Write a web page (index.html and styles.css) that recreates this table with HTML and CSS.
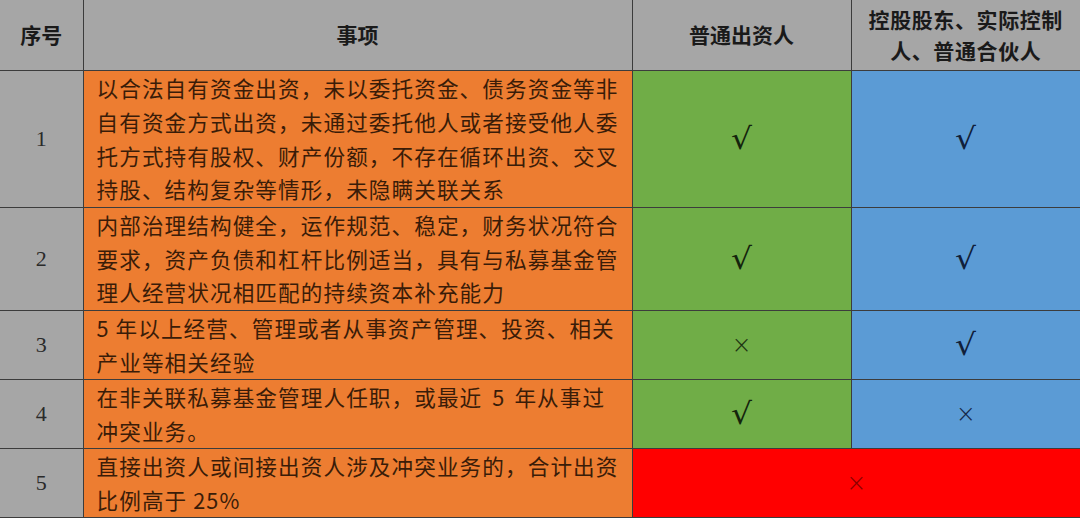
FILE: index.html
```html
<!DOCTYPE html>
<html lang="zh">
<head>
<meta charset="utf-8">
<link rel="stylesheet" href="styles.css">
</head>
<body>
<table class="grid">
  <colgroup>
    <col class="c-no"><col class="c-item"><col class="c-a"><col class="c-b">
  </colgroup>
  <thead>
    <tr class="r-head">
      <th>序号</th>
      <th>事项</th>
      <th>普通出资人</th>
      <th class="th-wrap">控股股东、实际控制<br>人、普通合伙人</th>
    </tr>
  </thead>
  <tbody>
    <tr class="r1">
      <td class="no">1</td>
      <td class="item">以合法自有资金出资，未以委托资金、债务资金等非<br>自有资金方式出资，未通过委托他人或者接受他人委<br>托方式持有股权、财产份额，不存在循环出资、交叉<br>持股、结构复杂等情形，未隐瞒关联关系</td>
      <td class="ga"><span class="ok">√</span></td>
      <td class="bl"><span class="ok">√</span></td>
    </tr>
    <tr class="r2">
      <td class="no">2</td>
      <td class="item">内部治理结构健全，运作规范、稳定，财务状况符合<br>要求，资产负债和杠杆比例适当，具有与私募基金管<br>理人经营状况相匹配的持续资本补充能力</td>
      <td class="ga"><span class="ok">√</span></td>
      <td class="bl"><span class="ok">√</span></td>
    </tr>
    <tr class="r3">
      <td class="no">3</td>
      <td class="item">5 年以上经营、管理或者从事资产管理、投资、相关<br>产业等相关经验</td>
      <td class="ga"><span class="no-mark">×</span></td>
      <td class="bl"><span class="ok">√</span></td>
    </tr>
    <tr class="r3">
      <td class="no">4</td>
      <td class="item">在非关联私募基金管理人任职，或最近<span class="gap">5</span>年从事过<br>冲突业务。</td>
      <td class="ga"><span class="ok">√</span></td>
      <td class="bl"><span class="no-mark">×</span></td>
    </tr>
    <tr class="r3">
      <td class="no">5</td>
      <td class="item">直接出资人或间接出资人涉及冲突业务的，合计出资<br>比例高于 25%</td>
      <td class="rd" colspan="2"><span class="no-mark red-x">×</span></td>
    </tr>
  </tbody>
</table>
</body>
</html>
```
FILE: styles.css
```css
html, body {
  margin: 0;
  padding: 0;
  background: #ffffff;
}
.grid {
  border-collapse: collapse;
  table-layout: fixed;
  width: 1080px;
  font-family: "Noto Sans CJK SC", "Liberation Serif", serif;
}
.c-no { width: 83px; }
.c-item { width: 549px; }
.c-a { width: 219px; }
.c-b { width: 229px; }

.grid th, .grid td {
  border: 1px solid #3c3c3c;
  padding: 0;
  vertical-align: middle;
}
.grid tr > :first-child { border-left: none; }
.grid tr > :last-child { border-right: none; }
.r-head th {
  border-top: none;
}

.r-head { height: 70px; }
.r1 { height: 137px; }
.r2 { height: 103px; }
.r3 { height: 69px; }

.r-head th {
  background: #a6a6a6;
  color: #1a1a1a;
  font-weight: 700;
  font-size: 21px;
  line-height: 31px;
  text-align: center;
}
.th-wrap {
  font-size: 21.5px;
  letter-spacing: 0.6px;
}

.no {
  background: #a6a6a6;
  color: #2a2a2a;
  font-family: "Liberation Serif", serif;
  font-size: 22px;
  text-align: center;
}
.item {
  background: #ed7d31;
  color: #3a1c08;
  font-size: 21.6px;
  line-height: 33.6px;
  letter-spacing: 1.1px;
  padding-left: 13px !important;
  white-space: nowrap;
  overflow: hidden;
}
.gap {
  display: inline-block;
  padding: 0 9px 0 10px;
}
.ga { background: #70ad47; text-align: center; }
.bl { background: #5b9bd5; text-align: center; }
.rd { background: #ff0000; text-align: center; }

.ok {
  display: inline-block;
  font-family: "DejaVu Sans", sans-serif;
  font-size: 30px;
  line-height: 30px;
  transform: scaleX(1.1);
  color: #14240c;
}
.bl .ok { color: #10203a; }
.no-mark {
  font-family: "DejaVu Sans", sans-serif;
  font-weight: 300;
  font-size: 24px;
  line-height: 30px;
  color: #1e3412;
}
.bl .no-mark { color: #16284a; }
.red-x { color: #8a0000; }
```
